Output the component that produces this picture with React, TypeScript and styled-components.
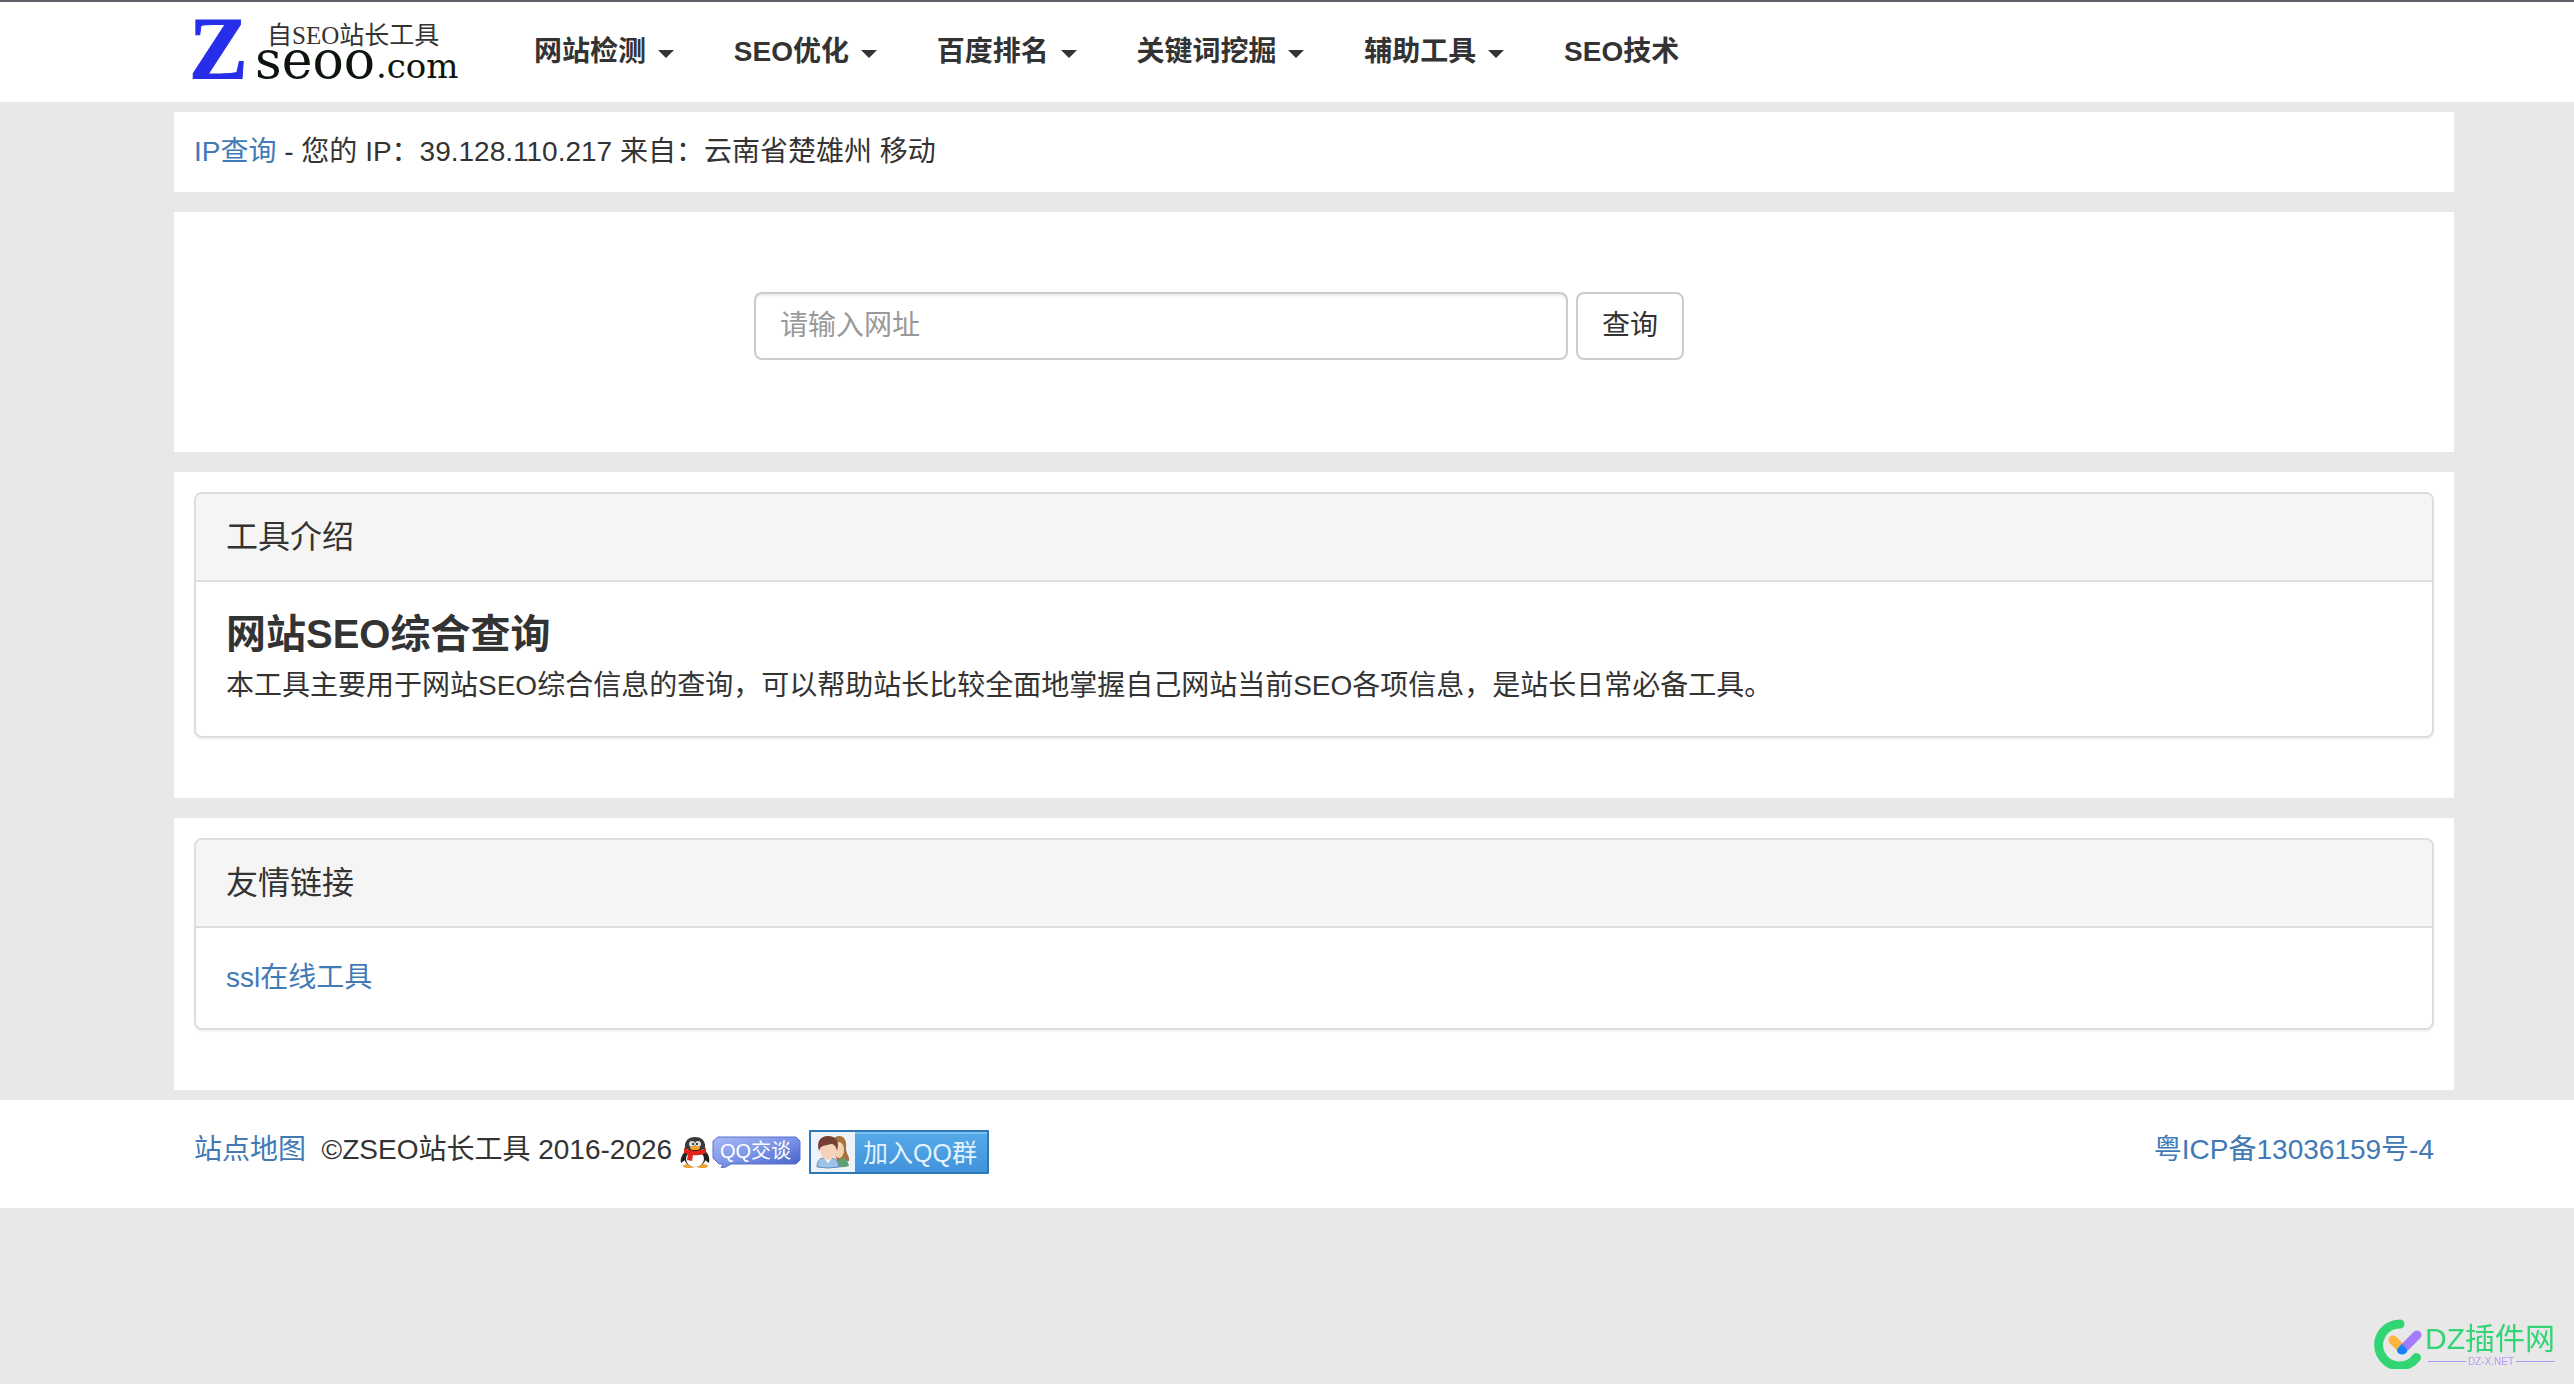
import React from 'react';
import styled, { createGlobalStyle } from 'styled-components';

const sans = '"Liberation Sans", "Noto Sans CJK SC", sans-serif';
const serif = '"Liberation Serif", "Noto Sans CJK SC", serif';
const wideSerif = '"DejaVu Serif", "Liberation Serif", serif';

const GlobalStyle = createGlobalStyle`
  *, *::before, *::after { box-sizing: border-box; }
  body {
    margin: 0;
    background: #e8e8e8;
    color: #333;
    font-family: ${sans};
    font-size: 28px;
    line-height: 40px;
  }
`;

const Link = styled.a`
  color: #427ab6;
  text-decoration: none;
`;

const Header = styled.header`
  display: flex;
  align-items: center;
  gap: 46px;
  height: 102px;
  padding: 0 120px 0 188px;
  border-top: 2px solid #635f68;
  background: #fff;
`;

const HomeLink = styled.a`
  display: block;
  flex: none;
  svg { display: block; overflow: visible; }
`;

const Nav = styled.nav`
  display: flex;
  white-space: nowrap;
`;

const NavButton = styled.button`
  padding: 0 30px;
  border: 0;
  background: none;
  color: inherit;
  font: inherit;
  font-weight: 700;
  cursor: pointer;
`;

const NavLink = styled.a`
  padding: 0 30px;
  color: inherit;
  font-weight: 700;
  text-decoration: none;
`;

const Caret = styled.span`
  display: inline-block;
  margin-left: 4px;
  vertical-align: middle;
  border-top: 8px solid currentColor;
  border-left: 8px solid transparent;
  border-right: 8px solid transparent;
`;

const Main = styled.main`
  display: flex;
  flex-direction: column;
  gap: 20px;
  padding: 10px 120px 10px 174px;
`;

const InfoBar = styled.section`
  padding: 20px;
  background: #fff;
`;

const SearchSection = styled.section`
  padding: 80px 0 92px;
  background: #fff;
`;

const SearchForm = styled.form`
  display: flex;
  gap: 8px;
  width: 50%;
  margin-left: 25%;
  padding: 0 10px;
`;

const UrlInput = styled.input`
  flex: 0 1 814px;
  min-width: 0;
  height: 68px;
  padding: 0 24px;
  border: 2px solid #ccc;
  border-radius: 8px;
  background: #fff;
  box-shadow: inset 0 2px 2px rgba(0, 0, 0, 0.075);
  color: #555;
  font: inherit;
  &::placeholder { color: #999; opacity: 1; }
`;

const SubmitButton = styled.button`
  flex: none;
  padding: 0 24px;
  border: 2px solid #ccc;
  border-radius: 8px;
  background: #fff;
  color: inherit;
  font: inherit;
  cursor: pointer;
`;

const Section = styled.section`
  padding: 20px 20px 60px;
  background: #fff;
`;

const Card = styled.div`
  overflow: hidden;
  border: 2px solid #ddd;
  border-radius: 8px;
  box-shadow: 0 2px 2px rgba(0, 0, 0, 0.05);
`;

const CardTitle = styled.h2`
  margin: 0;
  padding: 20px 30px;
  border-bottom: 2px solid #ddd;
  background: #f5f5f5;
  font-size: 32px;
  font-weight: 400;
  line-height: 46px;
`;

const CardBody = styled.div`
  padding: 30px;
`;

const ToolName = styled.h3`
  margin: 0 0 10px;
  font-size: 40px;
  font-weight: 700;
  line-height: 44px;
`;

const Paragraph = styled.p`
  margin: 0;
`;

const Footer = styled.footer`
  display: flex;
  align-items: baseline;
  justify-content: space-between;
  padding: 30px 140px 34px 194px;
  background: #fff;
`;

const Badge = styled.a`
  svg { vertical-align: middle; }
`;

const Watermark = styled.aside`
  position: fixed;
  right: 17px;
  bottom: 15px;
  svg { display: block; }
`;

function Logo() {
  return (
    <svg width="270" height="100" viewBox="0 0 270 100" role="img" aria-label="Zseoo.com">
      <text x="1" y="76" fontSize="88" fontWeight="700" fill="#262eea" stroke="#262eea" strokeWidth="1" fontFamily={serif}>Z</text>
      <text x="79" y="42" fontSize="25" fill="#333" fontFamily={serif}>自SEO站长工具</text>
      <g fill="#0d140d" fontFamily={wideSerif}>
        <text x="67" y="76" fontSize="52">seoo</text>
        <text x="188" y="76" fontSize="34">.com</text>
      </g>
    </svg>
  );
}

function QQChat() {
  return (
    <svg width="121" height="32" viewBox="0 0 121 32" role="img" aria-label="QQ交谈">
      <defs>
        <linearGradient id="bubble" x1="0" y1="0" x2="1" y2="1">
          <stop offset="0" stopColor="#aab9f6" />
          <stop offset="0.5" stopColor="#7b93e6" />
          <stop offset="1" stopColor="#3c5cc6" />
        </linearGradient>
      </defs>
      <ellipse cx="9" cy="30" rx="6" ry="2" fill="#f4a12a" />
      <ellipse cx="22" cy="30" rx="6" ry="2" fill="#f4a12a" />
      <path d="M6 15C2 18 0 23 1 27L5 24ZM25 15C29 18 30 23 29 27L25 24Z" fill="#222" />
      <ellipse cx="15" cy="21" rx="11" ry="10" fill="#222" />
      <ellipse cx="15" cy="23" rx="9" ry="8" fill="#fff" />
      <path d="M5 13C4 5 8 1 15 1S26 5 25 13Z" fill="#3a3a3a" />
      <ellipse cx="12" cy="8" rx="3" ry="3" fill="#ddd" />
      <ellipse cx="18" cy="8" rx="3" ry="3" fill="#ddd" />
      <circle cx="13" cy="8" r="1" fill="#111" />
      <circle cx="17" cy="8" r="1" fill="#111" />
      <ellipse cx="15" cy="12" rx="5" ry="2" fill="#f6a623" />
      <path d="M4 12Q15 18 26 12L26 17Q20 20 13 19L12 25L7 24L8 18L4 17Z" fill="#e3231b" />
      <path d="M38 1H116L120 5V24L116 28H51L44 32H41L43 28H39L33 22V5Z" fill="url(#bubble)" stroke="#5a72c8" />
      <text x="40" y="22" fontSize="20" fill="#fff" fontFamily={sans}>QQ交谈</text>
    </svg>
  );
}

function QQGroup() {
  return (
    <svg width="180" height="44" viewBox="0 0 180 44" role="img" aria-label="加入QQ群">
      <defs>
        <linearGradient id="group" x1="0" y1="0" x2="0" y2="1">
          <stop offset="0" stopColor="#56aae8" />
          <stop offset="1" stopColor="#4292db" />
        </linearGradient>
      </defs>
      <rect width="180" height="44" rx="1" fill="#2f78b6" />
      <rect x="2" y="2" width="176" height="40" fill="url(#group)" />
      <rect x="2" y="2" width="176" height="2" fill="#7cc2f2" />
      <rect x="2" y="2" width="44" height="40" fill="#eef2fa" />
      <path d="M24 18C23 9 26 6 30 6C36 6 38 12 37 18C37 24 41 26 40 31H28Z" fill="#a9713c" />
      <path d="M28 30L35 28Q39 30 40 36Q34 38 28 37Z" fill="#5fa173" />
      <ellipse cx="30" cy="20" rx="5" ry="8" fill="#f3d2b2" />
      <path d="M8 37Q8 29 14 28H23Q29 29 30 37Q19 39 8 37Z" fill="#9fc3e6" stroke="#5e8fc0" />
      <path d="M15 28L19 33L23 28Z" fill="#fff" />
      <ellipse cx="19" cy="20" rx="8" ry="10" fill="#f5d3b8" />
      <path d="M10 21C7 11 12 6 19 6C27 6 31 11 28 21C27 16 25 14 22 14C17 16 12 14 10 21Z" fill="#754032" />
      <text x="54" y="32" fontSize="25" fill="#e3f2fd" fontFamily={sans}>加入QQ群</text>
    </svg>
  );
}

function WatermarkMark() {
  return (
    <svg width="184" height="56" viewBox="0 0 184 56" role="img" aria-label="DZ插件网">
      <g fill="none" strokeLinecap="round">
        <path d="M27 11A21 21 0 1 0 43.500 44.500" stroke="#32d574" strokeWidth="9" />
        <path d="M20 27L29 36" stroke="#fdb53a" strokeWidth="9" />
        <path d="M44 22L30 36" stroke="#a37dfc" strokeWidth="9" />
      </g>
      <path d="M29 31L33 35Q35 38 33 40Q29 43 25 40Q23 37 25 35Z" fill="#1583fb" />
      <g fontFamily={sans}>
        <text x="52" y="36" fontSize="30" fill="#32d574">DZ插件网</text>
        <text x="95" y="52" fontSize="10" fill="#b39af0">DZ-X.NET</text>
      </g>
      <path d="M55 48.500H93M143 48.500H182" stroke="#b39af0" />
    </svg>
  );
}

const menus = ['网站检测', 'SEO优化', '百度排名', '关键词挖掘', '辅助工具'];

export default function App() {
  return (
    <>
      <GlobalStyle />
      <Header>
        <HomeLink href="#"><Logo /></HomeLink>
        <Nav>
          {menus.map((label) => (
            <NavButton key={label} type="button" aria-haspopup="true">
              {label} <Caret />
            </NavButton>
          ))}
          <NavLink href="#">SEO技术</NavLink>
        </Nav>
      </Header>
      <Main>
        <InfoBar>
          <Link href="#">IP查询</Link> - 您的 IP：39.128.110.217 来自：云南省楚雄州 移动
        </InfoBar>
        <SearchSection>
          <SearchForm onSubmit={(event) => event.preventDefault()}>
            <UrlInput type="text" aria-label="请输入网址" placeholder="请输入网址" />
            <SubmitButton type="submit">查询</SubmitButton>
          </SearchForm>
        </SearchSection>
        <Section>
          <Card>
            <CardTitle>工具介绍</CardTitle>
            <CardBody>
              <ToolName>网站SEO综合查询</ToolName>
              <Paragraph>
                本工具主要用于网站SEO综合信息的查询，可以帮助站长比较全面地掌握自己网站当前SEO各项信息，是站长日常必备工具。
              </Paragraph>
            </CardBody>
          </Card>
        </Section>
        <Section>
          <Card>
            <CardTitle>友情链接</CardTitle>
            <CardBody>
              <Link href="#">ssl在线工具</Link>
            </CardBody>
          </Card>
        </Section>
      </Main>
      <Footer>
        <div>
          <Link href="#">站点地图</Link>&nbsp; ©ZSEO站长工具 2016-2026{' '}
          <Badge href="#"><QQChat /></Badge>{' '}
          <Badge href="#"><QQGroup /></Badge>
        </div>
        <Link href="#">粤ICP备13036159号-4</Link>
      </Footer>
      <Watermark><WatermarkMark /></Watermark>
    </>
  );
}
